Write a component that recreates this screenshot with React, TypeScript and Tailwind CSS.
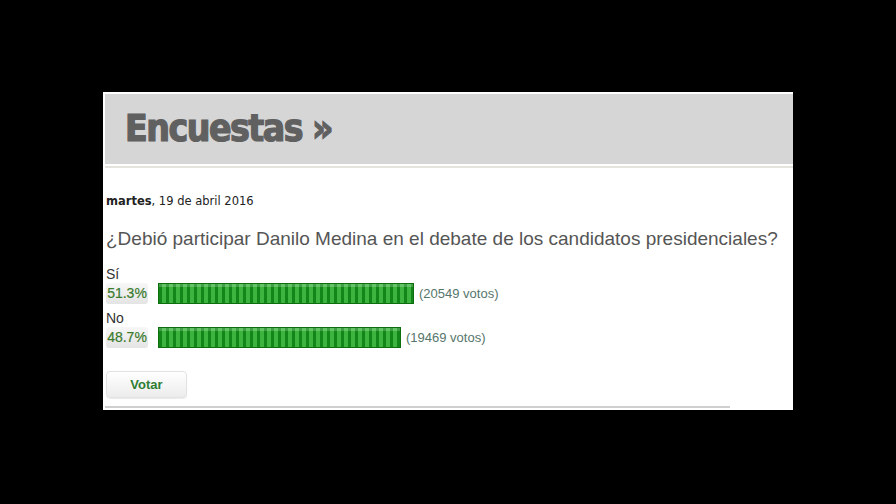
import React from "react";

const OPTIONS = [
  { label: "Sí", pct: "51.3%", votes: 20549, width: 256 },
  { label: "No", pct: "48.7%", votes: 19469, width: 243 },
];

function PollRow({ label, pct, votes, width }: (typeof OPTIONS)[number]) {
  return (
    <div className="mb-[6px]">
      <div className="h-[17px] text-[14px] leading-[17px] text-[#333]">{label}</div>
      <div className="flex items-center">
        <div className="flex h-[21px] w-[42px] items-center justify-center rounded-[3px] bg-gradient-to-b from-[#f7f7f7] to-[#e4e4e4] text-[14px] text-[#3a7a2e] [-webkit-text-stroke:0.2px_#3a7a2e]">
          {pct}
        </div>
        <div
          className="ml-[10px] h-[21px] border border-[#0d6e0d] bg-[repeating-linear-gradient(90deg,#13861a_0px,#13861a_3px,#3cb43f_3px,#3cb43f_7px)] shadow-[inset_0_3px_0_rgba(255,255,255,0.2)]"
          style={{ width }}
        />
        <span className="ml-[5px] text-[13px] text-[#56766c]">({votes} votos)</span>
      </div>
    </div>
  );
}

export default function App() {
  return (
    <div className="h-[504px] w-[896px] bg-black pt-[92px] pl-[103px] font-['Liberation_Sans',Arial,sans-serif]">
      <div className="flex h-[318px] w-[690px] flex-col bg-white pt-[2px] pl-[2px]">
        <div className="flex h-[70px] items-center bg-[#d6d6d6] pl-[20px]">
          <h1 className="font-['DejaVu_Sans_Condensed','DejaVu_Sans',sans-serif] text-[37px] font-bold tracking-[-1.5px] text-[#606060] [-webkit-text-stroke:1.2px_#606060]">
            Encuestas »
          </h1>
        </div>
        <div className="mt-[2px] h-[2px] bg-[#e4e4dc]" />
        <div className="flex-1 pl-[1px] pt-[26px]">
          <div className="font-['DejaVu_Sans',Verdana,sans-serif] text-[11.5px] leading-[14px] text-[#222]">
            <span className="font-bold">martes</span>, 19 de abril 2016
          </div>
          <h2 className="mt-[19px] whitespace-nowrap text-[19px] leading-[24px] text-[#555]">
            ¿Debió participar Danilo Medina en el debate de los candidatos presidenciales?
          </h2>
          <div className="mt-[15px]">
            {OPTIONS.map((o) => (
              <PollRow key={o.label} {...o} />
            ))}
          </div>
          <button className="mt-[17px] h-[27px] w-[81px] rounded-[4px] border border-[#e2e2e2] bg-gradient-to-b from-white to-[#ececec] text-[13px] font-bold text-[#2f7d32] shadow-[0_1px_1px_rgba(0,0,0,0.08)]">
            Votar
          </button>
        </div>
        <div className="mb-[2px] h-[2px] w-[625px] bg-[#cfcfcf]" />
      </div>
    </div>
  );
}
